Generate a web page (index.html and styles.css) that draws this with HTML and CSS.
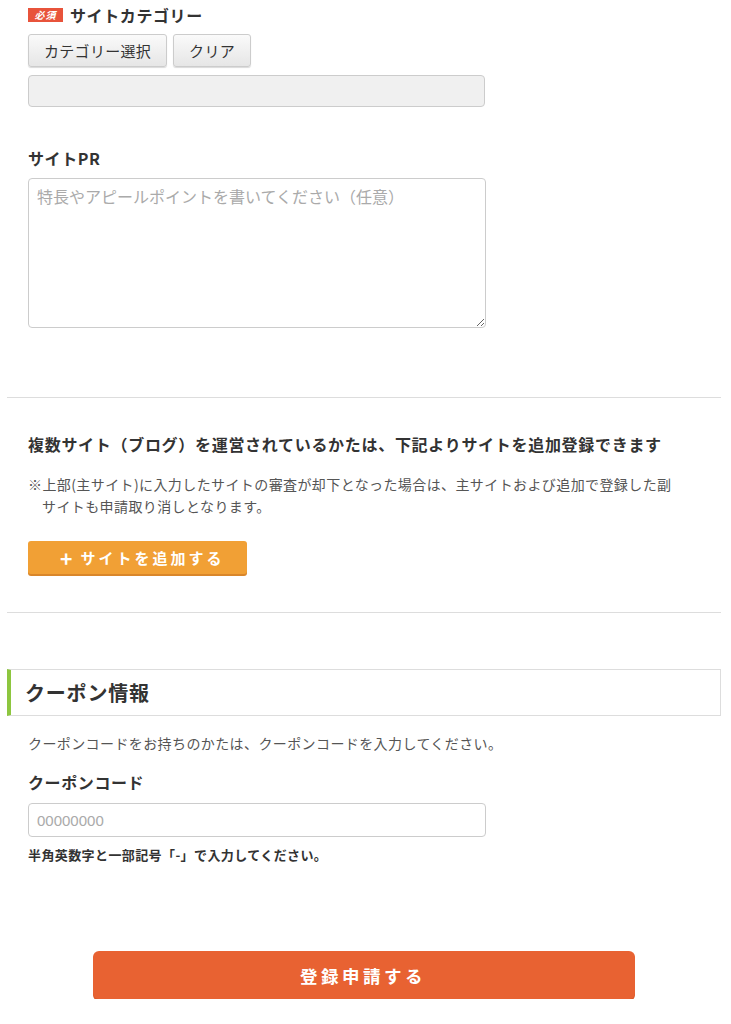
FILE: index.html
```html
<!doctype html>
<html>
<head>
	<meta charset="utf-8" />
	<title>サイト登録</title>
	<link rel="stylesheet" href="styles.css">
</head>
<body>
	<div class="page">
		<div class="block">
			<div class="label"><span class="req">必須</span>サイトカテゴリー</div>
			<div class="btnrow">
				<button class="graybtn">カテゴリー選択</button>
				<button class="graybtn">クリア</button>
			</div>
			<div class="readonly"></div>

			<div class="label pr">サイトPR</div>
			<textarea class="prbox" placeholder="特長やアピールポイントを書いてください（任意）"></textarea>
		</div>

		<hr class="divider first" />

		<div class="block">
			<h3 class="multi">複数サイト（ブログ）を運営されているかたは、下記よりサイトを追加登録できます</h3>
			<p class="note">※上部(主サイト)に入力したサイトの審査が却下となった場合は、主サイトおよび追加で登録した副サイトも申請取り消しとなります。</p>
			<button class="addbtn"><span class="plus">+</span>サイトを追加する</button>
		</div>

		<hr class="divider second" />

		<h2 class="boxhead">クーポン情報</h2>

		<div class="block">
			<p class="lead">クーポンコードをお持ちのかたは、クーポンコードを入力してください。</p>
			<div class="label coupon">クーポンコード</div>
			<input type="text" class="code" placeholder="00000000" />
			<p class="hint">半角英数字と一部記号「-」で入力してください。</p>
		</div>

		<div class="submitwrap">
			<button class="submit">登録申請する</button>
		</div>
	</div>
</body>
</html>
```

FILE: styles.css
```css
body
{
	margin: 0;
	background: #fff;
	color: #333;
	font-family: "Noto Sans CJK JP", "Noto Sans", sans-serif;
}

.page
{
	padding: 0 10px 0 7px;
}

.block
{
	padding: 0 0 0 21px;
}

.label
{
	font-size: 16px;
	font-weight: bold;
	line-height: 22px;
	letter-spacing: 0.6px;
	display: flex;
	align-items: center;
}

.label:first-child
{
	padding-top: 4px;
}

.req
{
	display: inline-block;
	width: 35px;
	height: 14px;
	line-height: 14px;
	margin-right: 7px;
	background: #e8533b;
	color: #fff;
	font-size: 10px;
	font-weight: bold;
	font-style: italic;
	text-align: center;
	letter-spacing: 1px;
}

.btnrow
{
	display: flex;
	gap: 6px;
	margin-top: 8px;
}

.graybtn
{
	height: 33px;
	padding: 0 15px;
	border: 1px solid #ccc;
	border-radius: 3px;
	background: linear-gradient(#fafafa, #e6e6e6);
	box-shadow: 0 1px 1px rgba(0,0,0,0.15);
	font-family: inherit;
	font-size: 15px;
	letter-spacing: 0.3px;
	color: #333;
}

.readonly
{
	width: 455px;
	height: 30px;
	margin-top: 8px;
	border: 1px solid #ccc;
	border-radius: 4px;
	background: #f0f0f0;
}

.label.pr
{
	margin-top: 40px;
}

.prbox
{
	display: block;
	box-sizing: border-box;
	width: 458px;
	height: 150px;
	margin-top: 9px;
	padding: 5px 8px;
	border: 1px solid #ccc;
	border-radius: 4px;
	font-family: inherit;
	font-size: 16px;
	resize: both;
}

.prbox::placeholder, .code::placeholder
{
	color: #aaa;
}

.divider
{
	border: 0;
	border-top: 1px solid #ddd;
	margin: 0;
}

.divider.first
{
	margin-top: 69px;
}

.divider.second
{
	margin-top: 38px;
}

.multi
{
	margin: 34px 0 0;
	font-size: 16px;
	line-height: 24px;
	letter-spacing: 0.7px;
}

.note
{
	margin: 17px 0 0;
	max-width: 634px;
	padding-left: 14px;
	text-indent: -14px;
	font-size: 14px;
	line-height: 22px;
	letter-spacing: 0.4px;
	color: #555;
}

.addbtn
{
	display: flex;
	align-items: center;
	width: 219px;
	height: 33px;
	margin-top: 24px;
	padding: 0 0 0 32px;
	border: 0;
	border-radius: 3px;
	background: #f1a035;
	box-shadow: 0 2px 0 #d9862a;
	color: #fff;
	font-family: inherit;
	font-size: 15px;
	font-weight: bold;
	letter-spacing: 3px;
}

.plus
{
	font-size: 21px;
	margin-right: 8px;
	letter-spacing: 0;
}

.boxhead
{
	box-sizing: border-box;
	height: 47px;
	margin: 56px 0 0;
	padding-left: 14px;
	border: 1px solid #ddd;
	border-left: 4px solid #8dc63f;
	font-size: 20px;
	line-height: 45px;
	letter-spacing: 0.8px;
}

.lead
{
	margin: 16px 0 0;
	font-size: 14px;
	line-height: 22px;
	letter-spacing: 0.4px;
	color: #555;
}

.label.coupon
{
	margin-top: 17px;
}

.code
{
	display: block;
	box-sizing: border-box;
	width: 458px;
	height: 34px;
	margin-top: 10px;
	padding: 0 8px;
	border: 1px solid #ccc;
	border-radius: 4px;
	font-family: "Liberation Sans", sans-serif;
	font-size: 15px;
}

.hint
{
	margin: 9px 0 0;
	font-size: 13px;
	font-weight: bold;
	line-height: 18px;
	letter-spacing: 0.4px;
}

.submitwrap
{
	display: flex;
	justify-content: center;
	margin-top: 87px;
}

.submit
{
	width: 542px;
	height: 48px;
	padding-left: 4px;
	border: 0;
	border-radius: 6px;
	background: #e86232;
	box-shadow: 0 2px 0 #d95a2a;
	color: #fff;
	font-family: inherit;
	font-size: 17.5px;
	font-weight: bold;
	letter-spacing: 3.5px;
}
```
